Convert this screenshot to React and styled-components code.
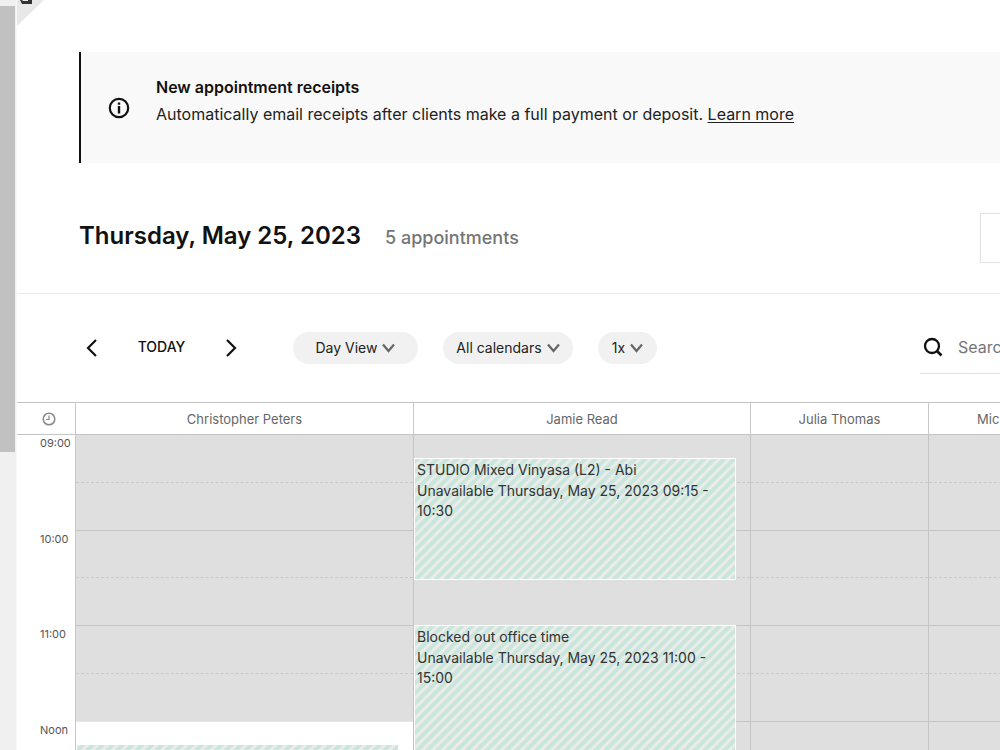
import React, { useState } from "react";
import styled, { createGlobalStyle } from "styled-components";

const GlobalStyle = createGlobalStyle`
  * {
    box-sizing: border-box;
  }

  body {
    margin: 0;
    overflow: hidden;
    background: #fff;
    color: #111;
    font-family: Inter, "Liberation Sans", sans-serif;
  }

  button,
  input,
  select {
    font-family: inherit;
    margin: 0;
  }
`;

const Screen = styled.div`
  display: flex;
  height: 100vh;
  overflow: hidden;
`;

const ScrollTrack = styled.div`
  flex: 0 0 17px;
  padding-top: 6px;
  background: #f0f0f0;
  border-right: 1px solid #f8f8f8;

  .thumb {
    width: 15px;
    height: 446px;
    background: #c1c1c1;
  }
`;

const Page = styled.main`
  position: relative;
  flex: 1;
  min-width: 0;
  overflow: hidden;
`;

const Corner = styled.svg`
  position: absolute;
  top: 0;
  left: 0;
`;

const Banner = styled.section`
  display: flex;
  align-items: center;
  gap: 26px;
  margin: 52px 0 0 62px;
  padding: 0 27px;
  border-left: 2px solid #111;
  background: #f9f9f9;
  font-size: 16px;
  line-height: 27px;

  .message {
    padding: 22px 0 35px;
  }

  h2 {
    margin: 0;
    font-size: 16px;
    font-weight: 600;
  }

  p {
    margin: 0;
    color: #222;
  }

  a {
    color: inherit;
    text-underline-offset: 2px;
  }
`;

const DayHeader = styled.header`
  display: flex;
  align-items: center;
  gap: 24px;
  margin-top: 50px;
  padding: 0 0 30px 62px;
  border-bottom: 1px solid #ebebeb;
  white-space: nowrap;

  h1 {
    margin: 0;
    padding-bottom: 4px;
    font-size: 24px;
    line-height: 32px;
    font-weight: 600;
  }

  .count {
    padding-bottom: 2px;
    color: #757575;
    font-size: 18px;
    font-weight: 500;
  }
`;

const OutlineButton = styled.button`
  flex: 0 0 160px;
  height: 50px;
  margin: 0 -140px 0 auto;
  border: 1px solid #e2e2e2;
  background: #fff;
`;

const Toolbar = styled.div`
  display: flex;
  align-items: center;
  height: 108px;
  padding-left: 64px;
`;

const DayNav = styled.nav`
  display: flex;
  align-items: center;
  justify-content: space-between;
  width: 161px;
  margin-right: 51px;
`;

const NavButton = styled.button`
  display: flex;
  padding: 4px;
  border: none;
  background: none;
  color: #111;
  font-size: 14px;
  font-weight: 500;
  cursor: pointer;
`;

const TodayButton = styled(NavButton)`
  padding-bottom: 8px;
`;

const Pill = styled.label`
  display: flex;
  align-items: center;
  justify-content: center;
  gap: 5px;
  width: ${(props) => props.$width}px;
  height: 32px;
  margin-right: 25px;
  border-radius: 16px;
  background: #f1f1f1;

  select {
    appearance: none;
    padding: 0;
    border: none;
    background: none;
    color: #222;
    font-size: 14px;
    line-height: 20px;
    field-sizing: content;
  }
`;

const Search = styled.label`
  display: flex;
  align-items: center;
  gap: 15px;
  flex: 0 0 240px;
  height: 52px;
  margin: 0 -160px 0 auto;
  padding: 0 0 2px 3px;
  border-bottom: 1px solid #e2e2e2;

  input {
    width: 180px;
    padding: 0;
    border: none;
    outline: none;
    font-size: 16px;
  }

  input::placeholder {
    color: #757575;
  }
`;

const Schedule = styled.div`
  display: grid;
  grid-template-columns: 59px 338px 337px 178px 178px;
  border-top: 1px solid #c4c4c4;
`;

const HeadCell = styled.div`
  display: flex;
  align-items: center;
  justify-content: ${(props) => (props.$cut ? "flex-start" : "center")};
  height: 32px;
  padding-left: ${(props) => (props.$cut ? 48 : 0)}px;
  border-right: 1px solid #c8c8c8;
  border-bottom: 1px solid #c4c4c4;
  color: #666;
  font-size: 13px;
`;

const ClockCell = styled(HeadCell)`
  padding-left: 6px;
`;

const Hours = styled.div`
  display: grid;
  grid-template-rows: repeat(4, 1fr);
  height: 382px;
  padding-left: 23px;
  border-right: 1px solid #c8c8c8;
  color: #555;
  font-size: 11px;
  line-height: 17px;
`;

const Column = styled.div`
  position: relative;
  display: grid;
  grid-template-rows: repeat(8, 1fr);
  border-right: 1px solid #c4c4c4;
`;

const lineStyle = ({ $half, $last }) => {
  if ($half) return "dashed #c9c9c9";
  return $last ? "solid #e6e6e6" : "solid #c4c4c4";
};

const Slot = styled.div`
  border-bottom: 1px ${lineStyle};
  background: ${(props) => (props.$open ? "#fff" : "#dfdfdf")};
`;

const Event = styled.article`
  position: absolute;
  left: 0;
  right: 14px;
  margin-top: -1px;
  padding: 1px 2px;
  overflow: hidden;
  border: 1px solid #fff;
  background: repeating-linear-gradient(
    -45deg,
    #c8e6dc 0,
    #c8e6dc 3px,
    #ebecea 4px,
    #ebecea 6px,
    #c8e6dc 7px
  );
  color: #333;
  font-size: 14px;
  line-height: 20px;

  p {
    margin: 0 0 1px;
  }
`;

const START = 9;
const HOURS = ["09:00", "10:00", "11:00", "Noon"];
const SLOTS = HOURS.length * 2;

const calendars = [
  {
    name: "Christopher Peters",
    opens: 12,
    events: [{ from: 12.25, to: 13 }],
  },
  {
    name: "Jamie Read",
    events: [
      {
        from: 9.25,
        to: 10.5,
        title: "STUDIO Mixed Vinyasa (L2) - Abi",
        detail: "Unavailable Thursday, May 25, 2023 09:15 - 10:30",
      },
      {
        from: 11,
        to: 15,
        title: "Blocked out office time",
        detail: "Unavailable Thursday, May 25, 2023 11:00 - 15:00",
      },
    ],
  },
  { name: "Julia Thomas", events: [] },
  { name: "Mic", cut: true, events: [] },
];

const percent = (hours) => `${(hours / HOURS.length) * 100}%`;

const Chevron = ({ d, width, height, color = "#111" }) => (
  <svg width={width} height={height} viewBox={`0 0 ${width} ${height}`} fill='none' aria-hidden='true'>
    <path d={d} stroke={color} strokeWidth='2.2' />
  </svg>
);

const PillSelect = ({ label, width, options }) => (
  <Pill $width={width}>
    <select aria-label={label}>
      {options.map((option) => (
        <option key={option}>{option}</option>
      ))}
    </select>
    <Chevron d='M1 1.5L6.5 8L12 1.5' width={13} height={10} color='#666' />
  </Pill>
);

const App = () => {
  const [query, setQuery] = useState("");

  return (
    <Screen>
      <GlobalStyle />
      <ScrollTrack>
        <div className='thumb' />
      </ScrollTrack>
      <Page>
        <Corner width='28' height='26' viewBox='0 0 28 26' aria-hidden='true'>
          <path d='M0 0H27L0 26Z' fill='#e8e8e8' />
          <path d='M3 0H5L6 1H11V0H15V4H5Z' fill='#333' />
        </Corner>
        <Banner>
          <svg width='22' height='22' viewBox='0 0 22 22' fill='none' aria-hidden='true'>
            <circle cx='11' cy='11' r='9.2' stroke='#111' strokeWidth='2.2' />
            <path d='M11 9V16.5M11 5.5V7.8' stroke='#111' strokeWidth='2.4' />
          </svg>
          <div className='message'>
            <h2>New appointment receipts</h2>
            <p>
              Automatically email receipts after clients make a full payment or
              deposit. <a href='#receipts'>Learn more</a>
            </p>
          </div>
        </Banner>
        <DayHeader>
          <h1>Thursday, May 25, 2023</h1>
          <span className='count'>5 appointments</span>
          <OutlineButton aria-label='More options' />
        </DayHeader>
        <Toolbar>
          <DayNav>
            <NavButton aria-label='Previous day'>
              <Chevron d='M11 1L3 9L11 17' width={13} height={18} />
            </NavButton>
            <TodayButton>TODAY</TodayButton>
            <NavButton aria-label='Next day'>
              <Chevron d='M2 1L10 9L2 17' width={13} height={18} />
            </NavButton>
          </DayNav>
          <PillSelect label='View' width={125} options={["Day View"]} />
          <PillSelect label='Calendars' width={130} options={["All calendars"]} />
          <PillSelect label='Zoom' width={59} options={["1x"]} />
          <Search>
            <svg width='20' height='20' viewBox='0 0 20 20' fill='none' aria-hidden='true'>
              <circle cx='9' cy='9' r='7' stroke='#111' strokeWidth='2.3' />
              <path d='M14 14L18.5 18.5' stroke='#111' strokeWidth='2.6' />
            </svg>
            <input
              type='text'
              aria-label='Search'
              placeholder='Search'
              value={query}
              onChange={(event) => setQuery(event.target.value)}
            />
          </Search>
        </Toolbar>
        <Schedule>
          <ClockCell>
            <svg width='14' height='14' viewBox='0 0 14 14' fill='none' aria-hidden='true'>
              <circle cx='7' cy='7' r='5.8' stroke='#888' strokeWidth='1.5' />
              <path d='M7 3.5V7.5H4' stroke='#888' strokeWidth='1.2' />
            </svg>
          </ClockCell>
          {calendars.map(({ name, cut }) => (
            <HeadCell key={name} $cut={cut}>
              {name}
            </HeadCell>
          ))}
          <Hours>
            {HOURS.map((hour) => (
              <span key={hour}>{hour}</span>
            ))}
          </Hours>
          {calendars.map(({ name, opens, events }) => (
            <Column key={name}>
              {Array.from({ length: SLOTS }, (_, index) => (
                <Slot
                  key={index}
                  $half={index % 2 === 0}
                  $open={START + index / 2 >= opens}
                  $last={START + (index + 1) / 2 === opens}
                />
              ))}
              {events.map(({ from, to, title, detail }) => (
                <Event
                  key={from}
                  style={{
                    top: percent(from - START),
                    height: `calc(${percent(to - from)} + 3px)`,
                  }}
                >
                  <p>{title}</p>
                  <p>{detail}</p>
                </Event>
              ))}
            </Column>
          ))}
        </Schedule>
      </Page>
    </Screen>
  );
};

export default App;
